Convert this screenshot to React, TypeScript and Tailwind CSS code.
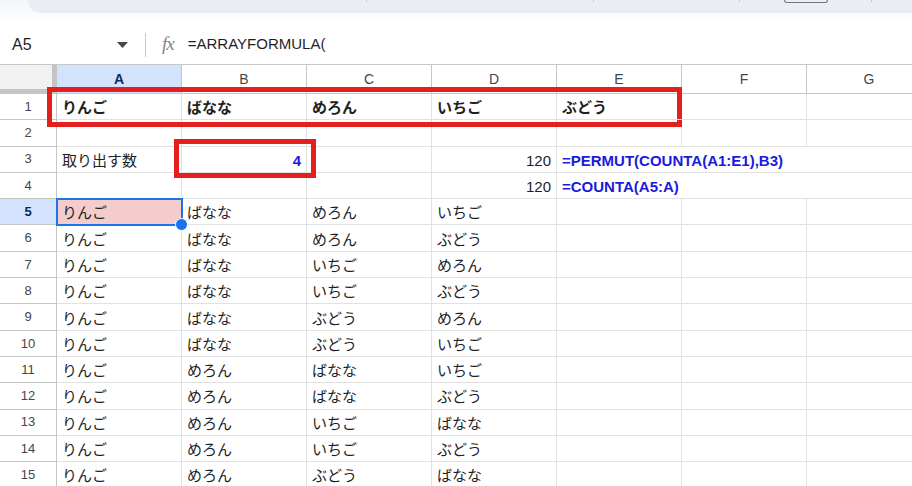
import React from 'react';

const COLS = ['A', 'B', 'C', 'D', 'E', 'F', 'G'];

type Cell = { v?: string; right?: boolean; bold?: boolean; blue?: boolean };

const fruitRows: string[][] = [
  ['りんご', 'ばなな', 'めろん', 'いちご'],
  ['りんご', 'ばなな', 'めろん', 'ぶどう'],
  ['りんご', 'ばなな', 'いちご', 'めろん'],
  ['りんご', 'ばなな', 'いちご', 'ぶどう'],
  ['りんご', 'ばなな', 'ぶどう', 'めろん'],
  ['りんご', 'ばなな', 'ぶどう', 'いちご'],
  ['りんご', 'めろん', 'ばなな', 'いちご'],
  ['りんご', 'めろん', 'ばなな', 'ぶどう'],
  ['りんご', 'めろん', 'いちご', 'ばなな'],
  ['りんご', 'めろん', 'いちご', 'ぶどう'],
  ['りんご', 'めろん', 'ぶどう', 'ばなな'],
];

const rows: Cell[][] = [
  ['りんご', 'ばなな', 'めろん', 'いちご', 'ぶどう'].map((v) => ({ v, bold: true })),
  [],
  [
    { v: '取り出す数' },
    { v: '4', right: true, bold: true, blue: true },
    {},
    { v: '120', right: true },
    { v: '=PERMUT(COUNTA(A1:E1),B3)', bold: true, blue: true },
  ],
  [{}, {}, {}, { v: '120', right: true }, { v: '=COUNTA(A5:A)', bold: true, blue: true }],
  ...fruitRows.map((r) => r.map((v) => ({ v }))),
];

const font = { fontFamily: '"Liberation Sans", "Noto Sans CJK JP", sans-serif' };

export default function App() {
  return (
    <div className="w-[912px] h-[486px] overflow-hidden bg-white relative text-[#1f1f1f]" style={font}>
      {/* top toolbar remnant */}
      <div className="h-[25px] bg-gradient-to-b from-[#f3f6fb] to-white">
        <div className="ml-[28px] h-[13px] bg-[#e9eef6] rounded-bl-[14px] flex items-start pl-[338px]">
          <div className="w-px h-[2px] bg-[#c4c7c5]" />
          <div className="w-px h-[2px] bg-[#c4c7c5] ml-[226px]" />
          <div className="w-px h-[2px] bg-[#c4c7c5] ml-[145px]" />
          <div className="w-[44px] h-[3px] border border-t-0 border-[#747775] rounded-b-[4px] ml-[44px]" />
          <div className="w-px h-[2px] bg-[#c4c7c5] ml-[43px]" />
        </div>
      </div>

      {/* formula bar */}
      <div className="h-[40px] flex items-center border-b border-[#c7c7c7]">
        <div className="w-[145px] flex items-center pl-[12px] pr-[17px]">
          <span className="text-[16px] text-[#1f1f1f] flex-1">A5</span>
          <svg width="11" height="6" viewBox="0 0 11 6">
            <path d="M0 0 L11 0 L5.5 6 Z" fill="#444746" />
          </svg>
        </div>
        <div className="w-px h-[24px] bg-[#c7c7c7]" />
        <span
          className="ml-[16px] text-[19px] italic text-[#80868b] tracking-[-1px]"
          style={{ fontFamily: '"Liberation Serif", serif' }}
        >
          fx
        </span>
        <span className="ml-[14px] text-[15px] text-[#1f1f1f]">=ARRAYFORMULA(</span>
      </div>

      {/* column header */}
      <div className="flex h-[29px] border-b border-[#c4c7c5]">
        <div className="w-[57px] shrink-0 bg-[#f1f1f1] border-r-[5px] border-b-[4px] border-[#c4c4c4]" />
        {COLS.map((c, i) => (
          <div
            key={c}
            className={`w-[125px] shrink-0 flex items-center justify-center border-r border-[#c4c7c5] text-[14px] ${
              i === 0 ? 'bg-[#d3e3fd] text-[#0b2a5c] font-bold' : 'text-[#444746]'
            }`}
          >
            {c}
          </div>
        ))}
      </div>

      {/* rows */}
      {Array.from({ length: 15 }).map((_, r) => {
        const cells = rows[r] || [];
        const selected = r === 4;
        return (
          <div key={r} className="flex h-[26.3px]">
            <div
              className={`w-[57px] shrink-0 flex items-center justify-center border-r border-b border-[#c4c7c5] text-[13px] ${
                selected ? 'bg-[#d3e3fd] text-[#0b2a5c] font-bold' : 'text-[#444746]'
              }`}
            >
              {r + 1}
            </div>
            {COLS.map((c, i) => {
              const cell = cells[i] || {};
              const overflow = i === 4 && cell.v;
              const active = selected && i === 0;
              return (
                <div
                  key={c}
                  className={`w-[125px] shrink-0 flex items-center border-b border-[#e1e1e1] text-[15px] leading-none pt-[2px] ${
                    overflow || (i === 5 && (r === 2 || r === 3)) ? '' : 'border-r'
                  } ${cell.right ? 'justify-end pr-[5px]' : 'pl-[5px]'} ${
                    active ? 'bg-[#f4cccc] relative outline-2 -outline-offset-1 outline-[#1a73e8] z-10' : ''
                  } ${cell.bold ? 'font-bold' : ''} ${cell.blue ? 'text-[#1a1ae0]' : ''} ${
                    overflow ? 'overflow-visible whitespace-nowrap relative z-10' : active ? '' : 'overflow-hidden'
                  }`}
                >
                  {cell.v}
                  {active && (
                    <span className="absolute -right-[7px] -bottom-[7px] w-[13px] h-[13px] rounded-full bg-[#1a73e8] border border-white" />
                  )}
                </div>
              );
            })}
          </div>
        );
      })}

      {/* annotation boxes */}
      <div className="absolute left-[47px] top-[87px] w-[635px] h-[40px] border-[5px] border-[#e3201e]" />
      <div className="absolute left-[174px] top-[139px] w-[142px] h-[39px] border-[5px] border-[#e3201e]" />
    </div>
  );
}
